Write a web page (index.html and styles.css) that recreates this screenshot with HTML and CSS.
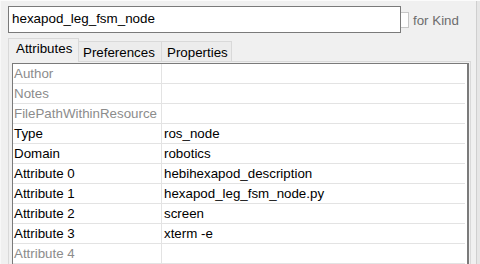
FILE: index.html
```html
<!DOCTYPE html>
<html>
<head>
<meta charset="utf-8">
<link rel="stylesheet" href="styles.css">
</head>
<body>
<div class="window">
  <div class="main">
    <div class="header">
      <div class="namebox">hexapod_leg_fsm_node</div>
      <div class="check"></div>
      <span class="kind">for Kind</span>
    </div>
    <div class="tabs">
      <div class="tab active">Attributes</div>
      <div class="tab">Preferences</div>
      <div class="tab">Properties</div>
    </div>
    <div class="panel">
      <div class="table">
        <div class="row dim"><div class="key">Author</div><div class="val"></div></div>
        <div class="row dim"><div class="key">Notes</div><div class="val"></div></div>
        <div class="row dim"><div class="key">FilePathWithinResource</div><div class="val"></div></div>
        <div class="row"><div class="key">Type</div><div class="val">ros_node</div></div>
        <div class="row"><div class="key">Domain</div><div class="val">robotics</div></div>
        <div class="row"><div class="key">Attribute 0</div><div class="val">hebihexapod_description</div></div>
        <div class="row"><div class="key">Attribute 1</div><div class="val">hexapod_leg_fsm_node.py</div></div>
        <div class="row"><div class="key">Attribute 2</div><div class="val">screen</div></div>
        <div class="row"><div class="key">Attribute 3</div><div class="val">xterm -e</div></div>
        <div class="row dim"><div class="key">Attribute 4</div><div class="val"></div></div>
      </div>
    </div>
  </div>
  <div class="edge"></div>
</div>
</body>
</html>
```
FILE: styles.css
```css
html, body {
  margin: 0;
  padding: 0;
  width: 480px;
  height: 264px;
  overflow: hidden;
  background: #f0f0f0;
  font-family: "Liberation Sans", Arial, sans-serif;
  font-size: 13.33px;
  color: #000;
}
.window {
  display: flex;
  width: 480px;
  height: 264px;
  border-top: 1px solid #fbfbfb;
  box-sizing: border-box;
}
.main {
  flex: 1;
  display: flex;
  flex-direction: column;
  border-left: 1px solid #f8f8f8;
}
.edge {
  width: 3px;
  border-left: 1px solid #cfcfcf;
  background: #e6e6e6;
}
.header {
  display: flex;
  align-items: flex-start;
  padding: 5px 0 0 7px;
  height: 32px;
  box-sizing: border-box;
}
.namebox {
  width: 393px;
  height: 27px;
  box-sizing: border-box;
  border: 1px solid #7a7a7a;
  background: #fff;
  padding-left: 3px;
  line-height: 24px;
  font-size: 13.4px;
}
.check {
  width: 8px;
  height: 16px;
  margin-top: 6px;
  box-sizing: border-box;
  border: 1px solid #c8c8c8;
  border-left: none;
  background: #fff;
}
.kind {
  margin-left: 4px;
  margin-top: 7px;
  color: #6d6d6d;
  line-height: 16px;
}
.tabs {
  display: flex;
  align-items: flex-end;
  padding-left: 7px;
  height: 28px;
  box-sizing: border-box;
}
.tab {
  height: 20px;
  box-sizing: border-box;
  border: 1px solid #d9d9d9;
  border-bottom: none;
  border-left: none;
  background: #ececec;
  line-height: 22px;
}
.tab.active {
  width: 71px;
  height: 24px;
  border-left: 1px solid #d9d9d9;
  background: #f0f0f0;
  padding-left: 7px;
  line-height: 20px;
  position: relative;
  z-index: 1;
  margin-bottom: -1px;
}
.tab:nth-child(2) { width: 83px; padding-left: 4px; }
.tab:nth-child(3) { width: 70px; padding-left: 5px; }
.panel {
  margin-left: 7px;
  width: 463px;
  flex: 1;
  border: 1px solid #d9d9d9;
  border-bottom: none;
  padding: 1px 1px 0 3px;
  box-sizing: border-box;
  overflow: hidden;
}
.table {
  border-top: 1px solid #7a7a7a;
  border-left: 1px solid #7a7a7a;
  border-right: 2px solid #7a7a7a;
  background: #fff;
  height: 220px;
  padding-right: 2px;
}
.row {
  display: grid;
  grid-template-columns: 149px 1fr;
  height: 20px;
  box-sizing: border-box;
  border-bottom: 1px solid #e3e3e3;
  line-height: 19px;
  white-space: nowrap;
}
.key {
  border-right: 1px solid #e3e3e3;
  padding-left: 1px;
  overflow: hidden;
}
.val {
  padding-left: 2px;
}
.row.dim .key { color: #8c8c8c; }
```
